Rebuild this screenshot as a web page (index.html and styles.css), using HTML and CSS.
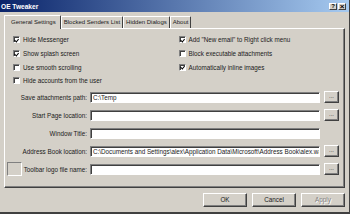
FILE: index.html
```html
<!DOCTYPE html>
<html>
<head>
<meta charset="utf-8">
<link rel="stylesheet" href="styles.css">
</head>
<body>
<div class="window">
  <div class="titlebar">
    <span class="title">OE Tweaker</span>
    <div class="tbtns">
      <span class="tbtn">?</span>
      <span class="tbtn x">×</span>
    </div>
  </div>
  <div class="tabs">
    <span class="tab active">General Settings</span>
    <span class="tab">Blocked Senders List</span>
    <span class="tab">Hidden Dialogs</span>
    <span class="tab">About</span>
  </div>
  <div class="panel">
    <div class="checks">
      <div class="col">
        <label class="chk"><span class="box on"></span>Hide Messenger</label>
        <label class="chk"><span class="box on"></span>Show splash screen</label>
        <label class="chk"><span class="box"></span>Use smooth scrolling</label>
        <label class="chk"><span class="box"></span>Hide accounts from the user</label>
      </div>
      <div class="col right">
        <label class="chk"><span class="box on"></span>Add "New email" to Right click menu</label>
        <label class="chk"><span class="box"></span>Block executable attachments</label>
        <label class="chk"><span class="box on"></span>Automatically inline images</label>
      </div>
    </div>
    <div class="form">
      <div class="row">
        <div class="lbl">Save attachments path:</div>
        <div class="inp">C:\Temp</div>
        <div class="btn dots">...</div>
      </div>
      <div class="row">
        <div class="lbl">Start Page location:</div>
        <div class="inp"></div>
        <div class="btn dots">...</div>
      </div>
      <div class="row">
        <div class="lbl">Window Title:</div>
        <div class="inp"></div>
      </div>
      <div class="row">
        <div class="lbl">Address Book location:</div>
        <div class="inp">C:\Documents and Settings\alex\Application Data\Microsoft\Address Book\alex.wab</div>
        <div class="btn dots">...</div>
      </div>
      <div class="row">
        <div class="lbl split"><span class="logo"></span><span>Toolbar logo file name:</span></div>
        <div class="inp"></div>
        <div class="btn dots">...</div>
      </div>
    </div>
  </div>
  <div class="footer">
    <div class="btn big">OK</div>
    <div class="btn big">Cancel</div>
    <div class="btn big disabled">Apply</div>
  </div>
</div>
</body>
</html>
```
FILE: styles.css
```css
* { box-sizing: border-box; }
html, body { margin: 0; padding: 0; }
body {
  width: 350px;
  height: 214px;
  background: #d4d0c8;
  font-family: "Liberation Sans", Arial, sans-serif;
  font-size: 6.3px;
  color: #1a1a1a;
  overflow: hidden;
}
.window {
  width: 350px;
  height: 214px;
  border-right: 1px solid #404040;
  border-bottom: 2px solid #404040;
  display: flex;
  flex-direction: column;
}
.titlebar {
  height: 12px;
  background: linear-gradient(to right, #0a246a, #a6caf0);
  display: flex;
  align-items: center;
  justify-content: space-between;
  padding: 0 3px 0 1px;
}
.title {
  color: #fff;
  font-weight: bold;
  font-size: 6.6px;
}
.tbtns { display: flex; gap: 1px; }
.tbtn {
  width: 8px;
  height: 7px;
  background: #d4d0c8;
  border-top: 1px solid #fff;
  border-left: 1px solid #fff;
  border-right: 1px solid #404040;
  border-bottom: 1px solid #404040;
  font-size: 6px;
  font-weight: bold;
  line-height: 5px;
  text-align: center;
  color: #000;
}
.tbtn.x { font-size: 8px; line-height: 5px; }
.tabs {
  display: flex;
  align-items: flex-end;
  height: 15px;
  padding-left: 4px;
  margin-top: 1px;
  font-size: 6px;
}
.tab {
  height: 12px;
  line-height: 11px;
  padding: 0 2px 0 2px;
  border-top: 1px solid #fff;
  border-left: 1px solid #fff;
  border-right: 1px solid #404040;
  border-radius: 1px 1px 0 0;
  white-space: nowrap;
}
.tab.active {
  height: 14px;
  line-height: 12px;
  padding: 0 4px 0 6px;
  position: relative;
  top: 1px;
  background: #d4d0c8;
}
.panel {
  margin: 0 4px 0 4px;
  height: 160px;
  border-top: 1px solid #fff;
  border-left: 1px solid #fff;
  border-right: 1px solid #404040;
  border-bottom: 1px solid #404040;
  box-shadow: inset -1px -1px 0 #808080;
  display: flex;
  flex-direction: column;
}
.checks {
  display: flex;
  padding: 7px 0 0 8px;
}
.col { display: flex; flex-direction: column; gap: 6px; width: 171px; }
.chk {
  display: flex;
  align-items: center;
  height: 7.7px;
  gap: 3px;
  white-space: nowrap;
}
.box {
  width: 7px;
  height: 7px;
  background: #fff;
  border-top: 1px solid #808080;
  border-left: 1px solid #808080;
  border-right: 1px solid #fff;
  border-bottom: 1px solid #fff;
  box-shadow: inset 1px 1px 0 #404040;
  position: relative;
  flex: none;
}
.box.on::after {
  content: "";
  position: absolute;
  left: 1.3px;
  top: 0.6px;
  width: 2px;
  height: 3.2px;
  border-right: 1.3px solid #000;
  border-bottom: 1.3px solid #000;
  transform: rotate(40deg);
}
.form {
  display: flex;
  flex-direction: column;
  gap: 7px;
  padding: 7px 0 0 2px;
}
.row {
  display: flex;
  align-items: center;
  height: 11px;
}
.lbl {
  width: 80px;
  text-align: right;
  white-space: nowrap;
  margin-right: 3px;
}
.lbl.split {
  display: flex;
  justify-content: space-between;
  align-items: center;
}
.logo {
  width: 15px;
  height: 14px;
  border-top: 1px solid #808080;
  border-left: 1px solid #808080;
  border-right: 1px solid #fff;
  border-bottom: 1px solid #fff;
}
.inp {
  width: 230px;
  height: 11px;
  background: #fff;
  border-top: 1px solid #808080;
  border-left: 1px solid #808080;
  border-right: 1px solid #fff;
  border-bottom: 1px solid #fff;
  box-shadow: inset 1px 1px 0 #404040;
  padding: 0 2px;
  line-height: 9px;
  white-space: nowrap;
  overflow: hidden;
}
.btn {
  background: #d4d0c8;
  border-top: 1px solid #fff;
  border-left: 1px solid #fff;
  border-right: 1px solid #404040;
  border-bottom: 1px solid #404040;
  box-shadow: inset -1px -1px 0 #808080;
  text-align: center;
}
.dots {
  width: 15px;
  height: 12px;
  margin-left: 4px;
  line-height: 8px;
  font-size: 6px;
}
.footer {
  display: flex;
  justify-content: flex-end;
  gap: 5px;
  padding: 5px 4px 0 0;
}
.big {
  width: 44px;
  height: 14px;
  line-height: 12px;
}
.disabled {
  color: #808080;
  text-shadow: 1px 1px 0 #fff;
}
```
